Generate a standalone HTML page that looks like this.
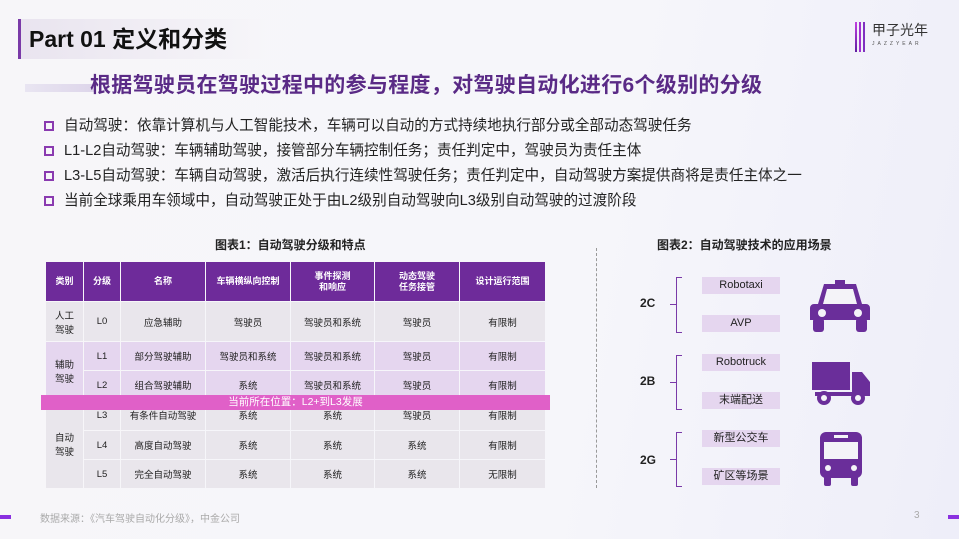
<!DOCTYPE html>
<html><head><meta charset="utf-8"><style>
*{margin:0;padding:0;box-sizing:border-box}
body{width:959px;height:539px;overflow:hidden;position:relative;font-family:"Liberation Sans","Noto Sans CJK SC",sans-serif;background:linear-gradient(100deg,#f7f6f9 0%,#f6f6fa 60%,#eeeef9 100%);color:#222}
.a{position:absolute}
.title{left:18px;top:19px;width:250px;height:40px;border-left:3px solid #7a3aa8;background:linear-gradient(90deg,#e9e4ef,rgba(240,238,244,0));font-weight:bold;font-size:23px;line-height:40px;padding-left:8px;color:#111}
.sub{left:90px;top:69px;font-size:21px;font-weight:bold;color:#5a2a86;letter-spacing:0.3px;white-space:nowrap}
.bul{left:44px;font-size:14.6px;color:#222;white-space:nowrap}
.bul i{display:inline-block;width:10px;height:10px;border:2px solid #8a3ab0;margin-right:10px;vertical-align:-1px}
table{border-collapse:separate;border-spacing:1px;font-size:9.5px;text-align:center;position:absolute;left:45px;top:261px;width:501px;table-layout:fixed}
td{background:#e9e6ec;color:#222}
th{background:#6e2b9a;color:#fff;font-weight:bold;height:39px;font-size:9px;line-height:11px}
.p td{background:#e5d6ef}
.bar{left:41px;top:395px;width:509px;height:15px;background:#e060c8;color:#fff;font-size:10.5px;text-align:center;line-height:15px}
.lb{width:78px;height:17px;background:#e5d6ef;font-size:11px;text-align:center;line-height:17px;left:702px}
.br{left:676px;width:6px;border:1.5px solid #7a3aa8;border-right:none}
.g{font-weight:bold;font-size:12px;left:640px}
</style></head><body>
<div class="a title">Part 01 定义和分类</div>
<div class="a" style="left:855px;top:22px;width:2px;height:30px;background:linear-gradient(#c040e0,#6020a0);box-shadow:4px 0 0 #a030d0,8px 0 0 #8030c0"></div>
<div class="a" style="left:872px;top:20px;font-size:14px;color:#333">甲子光年</div>
<div class="a" style="left:872px;top:41px;font-size:5px;letter-spacing:3px;color:#555">JAZZYEAR</div>
<div class="a" style="left:25px;top:84px;width:70px;height:8px;background:linear-gradient(90deg,rgba(200,190,225,0.3),#ddd5ea)"></div>
<div class="a sub">根据驾驶员在驾驶过程中的参与程度，对驾驶自动化进行6个级别的分级</div>
<div class="a bul" style="top:114px"><i></i>自动驾驶：依靠计算机与人工智能技术，车辆可以自动的方式持续地执行部分或全部动态驾驶任务</div>
<div class="a bul" style="top:139px"><i></i>L1-L2自动驾驶：车辆辅助驾驶，接管部分车辆控制任务；责任判定中，驾驶员为责任主体</div>
<div class="a bul" style="top:164px"><i></i>L3-L5自动驾驶：车辆自动驾驶，激活后执行连续性驾驶任务；责任判定中，自动驾驶方案提供商将是责任主体之一</div>
<div class="a bul" style="top:189px"><i></i>当前全球乘用车领域中，自动驾驶正处于由L2级别自动驾驶向L3级别自动驾驶的过渡阶段</div>
<div class="a" style="left:215px;top:236px;font-size:12px;font-weight:bold">图表1：自动驾驶分级和特点</div>
<table>
<colgroup><col style="width:37px"><col style="width:36px"><col style="width:84px"><col style="width:84px"><col style="width:83px"><col style="width:84px"><col style="width:85px"></colgroup>
<tr><th>类别</th><th>分级</th><th>名称</th><th>车辆横纵向控制</th><th>事件探测<br>和响应</th><th>动态驾驶<br>任务接管</th><th>设计运行范围</th></tr>
<tr style="height:39px"><td>人工<br>驾驶</td><td>L0</td><td>应急辅助</td><td>驾驶员</td><td>驾驶员和系统</td><td>驾驶员</td><td>有限制</td></tr>
<tr class="p" style="height:28px"><td rowspan="2">辅助<br>驾驶</td><td>L1</td><td>部分驾驶辅助</td><td>驾驶员和系统</td><td>驾驶员和系统</td><td>驾驶员</td><td>有限制</td></tr>
<tr class="p" style="height:28px"><td>L2</td><td>组合驾驶辅助</td><td>系统</td><td>驾驶员和系统</td><td>驾驶员</td><td>有限制</td></tr>
<tr style="height:30px"><td rowspan="3">自动<br>驾驶</td><td>L3</td><td>有条件自动驾驶</td><td>系统</td><td>系统</td><td>驾驶员</td><td>有限制</td></tr>
<tr style="height:28px"><td>L4</td><td>高度自动驾驶</td><td>系统</td><td>系统</td><td>系统</td><td>有限制</td></tr>
<tr style="height:28px"><td>L5</td><td>完全自动驾驶</td><td>系统</td><td>系统</td><td>系统</td><td>无限制</td></tr>
</table>
<div class="a bar">当前所在位置：L2+到L3发展</div>
<div class="a" style="left:596px;top:248px;height:240px;border-left:1px dashed #999"></div>
<div class="a" style="left:657px;top:236px;font-size:12px;font-weight:bold">图表2：自动驾驶技术的应用场景</div>
<div class="a g" style="top:296px">2C</div><div class="a g" style="top:374px">2B</div><div class="a g" style="top:453px">2G</div>
<div class="a br" style="top:277px;height:56px"></div><div class="a br" style="top:355px;height:55px"></div><div class="a br" style="top:432px;height:55px"></div>
<div class="a" style="left:670px;top:304px;width:7px;border-top:1.5px solid #7a3aa8"></div>
<div class="a" style="left:670px;top:382px;width:7px;border-top:1.5px solid #7a3aa8"></div>
<div class="a" style="left:670px;top:459px;width:7px;border-top:1.5px solid #7a3aa8"></div>
<div class="a lb" style="top:277px">Robotaxi</div><div class="a lb" style="top:315px">AVP</div>
<div class="a lb" style="top:354px">Robotruck</div><div class="a lb" style="top:392px">末端配送</div>
<div class="a lb" style="top:430px">新型公交车</div><div class="a lb" style="top:468px">矿区等场景</div>
<svg class="a" style="left:810px;top:280px" width="60" height="52" viewBox="0 0 60 52" fill="#6a2e9a">
<rect x="25" y="0" width="10" height="4"/><path d="M14 4h32l6 20h4a4 4 0 0 1 4 4v12H0V28a4 4 0 0 1 4-4h4z"/><path d="M17 9h26l4 15H13z" fill="#f4f3f8"/><circle cx="12" cy="33" r="4" fill="#f4f3f8"/><circle cx="48" cy="33" r="4" fill="#f4f3f8"/><rect x="3" y="38" width="11" height="14" rx="3"/><rect x="46" y="38" width="11" height="14" rx="3"/></svg>
<svg class="a" style="left:812px;top:362px" width="58" height="44" viewBox="0 0 58 44" fill="#6a2e9a">
<rect x="0" y="0" width="38" height="28"/><path d="M40 10h10l8 10v13H40z"/><rect x="3" y="30" width="55" height="4"/><circle cx="12" cy="36" r="7"/><circle cx="12" cy="36" r="3" fill="#f4f3f8"/><circle cx="46" cy="36" r="7"/><circle cx="46" cy="36" r="3" fill="#f4f3f8"/></svg>
<svg class="a" style="left:820px;top:432px" width="42" height="56" viewBox="0 0 42 56" fill="#6a2e9a">
<rect x="0" y="0" width="42" height="46" rx="6"/><rect x="14" y="3" width="14" height="3" fill="#f4f3f8"/><rect x="4" y="10" width="34" height="17" fill="#f4f3f8"/><circle cx="8" cy="36" r="3" fill="#f4f3f8"/><circle cx="34" cy="36" r="3" fill="#f4f3f8"/><rect x="4" y="44" width="7" height="10" rx="2"/><rect x="31" y="44" width="7" height="10" rx="2"/></svg>
<div class="a" style="left:0;top:515px;width:11px;height:4px;background:#8a30e0"></div>
<div class="a" style="left:40px;top:510px;font-size:10px;color:#aaa">数据来源：《汽车驾驶自动化分级》，中金公司</div>
<div class="a" style="left:914px;top:510px;font-size:10px;color:#aaa">3</div>
<div class="a" style="left:948px;top:515px;width:11px;height:4px;background:#8a30e0"></div>
</body></html>
